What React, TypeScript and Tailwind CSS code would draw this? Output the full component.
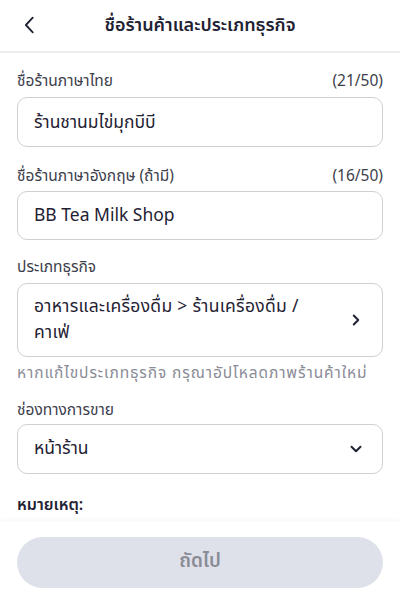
import React, { useState } from "react";

const font = {
  fontFamily: '"Noto Sans Thai", "Noto Sans", "Liberation Sans", sans-serif',
};

function ChevronLeft() {
  return (
    <svg width="22" height="22" viewBox="0 0 24 24" fill="none" stroke="#1f2233" strokeWidth="2" strokeLinecap="round" strokeLinejoin="round">
      <path d="M15 4l-7.5 8 7.5 8" />
    </svg>
  );
}

function ChevronRight() {
  return (
    <svg width="18" height="18" viewBox="0 0 24 24" fill="none" stroke="#1f2233" strokeWidth="2.6" strokeLinecap="round" strokeLinejoin="round">
      <path d="M9 6l6 6-6 6" />
    </svg>
  );
}

function ChevronDown() {
  return (
    <svg width="18" height="18" viewBox="0 0 24 24" fill="none" stroke="#1f2233" strokeWidth="2.6" strokeLinecap="round" strokeLinejoin="round">
      <path d="M6 9l6 6 6-6" />
    </svg>
  );
}

export default function App() {
  const [thaiName, setThaiName] = useState("ร้านชานมไข่มุกบีบี");
  const [engName, setEngName] = useState("BB Tea Milk Shop");

  return (
    <div className="flex h-[600px] w-[400px] flex-col bg-white text-[#1f2233]" style={font}>
      {/* header */}
      <div className="relative flex h-[53px] shrink-0 items-center justify-center border-b-2 border-[#ededed]">
        <button className="absolute left-[19px] top-[14px]">
          <ChevronLeft />
        </button>
        <h1 className="text-[18px] font-semibold leading-[24px]">ชื่อร้านค้าและประเภทธุรกิจ</h1>
      </div>

      {/* form */}
      <div className="flex-1 overflow-hidden px-[17px]">
        <div className="mt-[19px] flex h-[20px] items-center justify-between text-[15.5px] leading-[20px] text-[#3d404c]">
          <span>ชื่อร้านภาษาไทย</span>
          <span>({thaiName.length + 3}/50)</span>
        </div>
        <input
          value={thaiName}
          onChange={(e) => setThaiName(e.target.value)}
          className="mt-[5px] h-[50px] w-full rounded-[10px] border border-[#cfd0d6] px-4 text-[17.5px] outline-none"
        />

        <div className="mt-[20px] flex h-[20px] items-center justify-between text-[15.5px] leading-[20px] text-[#3d404c]">
          <span>ชื่อร้านภาษาอังกฤษ (ถ้ามี)</span>
          <span>({engName.length}/50)</span>
        </div>
        <input
          value={engName}
          onChange={(e) => setEngName(e.target.value)}
          className="mt-[4px] h-[49px] w-full rounded-[10px] border border-[#cfd0d6] px-4 text-[17.5px] outline-none"
        />

        <div className="mt-[18px] text-[15.5px] leading-[20px] text-[#3d404c]">ประเภทธุรกิจ</div>
        <button className="mt-[5px] flex h-[74px] w-full items-center justify-between rounded-[10px] border border-[#cfd0d6] pl-4 pr-[17px] text-left">
          <span className="text-[17.5px] leading-[26px] tracking-[0.3px]">
            อาหารและเครื่องดื่ม &gt; ร้านเครื่องดื่ม /<br />
            คาเฟ่
          </span>
          <ChevronRight />
        </button>
        <div className="mt-[7px] whitespace-nowrap text-[15.5px] leading-[20px] tracking-[0.9px] text-[#8a8c96]">
          หากแก้ไขประเภทธุรกิจ กรุณาอัปโหลดภาพร้านค้าใหม่
        </div>

        <div className="mt-[17px] text-[15.5px] leading-[20px] text-[#3d404c]">ช่องทางการขาย</div>
        <button className="mt-[3px] flex h-[50px] w-full items-center justify-between rounded-[10px] border border-[#cfd0d6] pl-4 pr-[17px]">
          <span className="text-[17.5px]">หน้าร้าน</span>
          <ChevronDown />
        </button>

        <div className="mt-[21px] text-[16px] font-semibold leading-[20px]">หมายเหตุ:</div>
      </div>

      {/* footer */}
      <div className="shrink-0 bg-white px-[17px] pb-[12px] pt-[15px] shadow-[0_-2px_6px_rgba(0,0,0,0.04)]">
        <button disabled className="flex h-[51px] w-full items-center justify-center rounded-full bg-[#dfe1ea] text-[19px] font-semibold text-[#8a8c96]">
          ถัดไป
        </button>
      </div>
    </div>
  );
}
